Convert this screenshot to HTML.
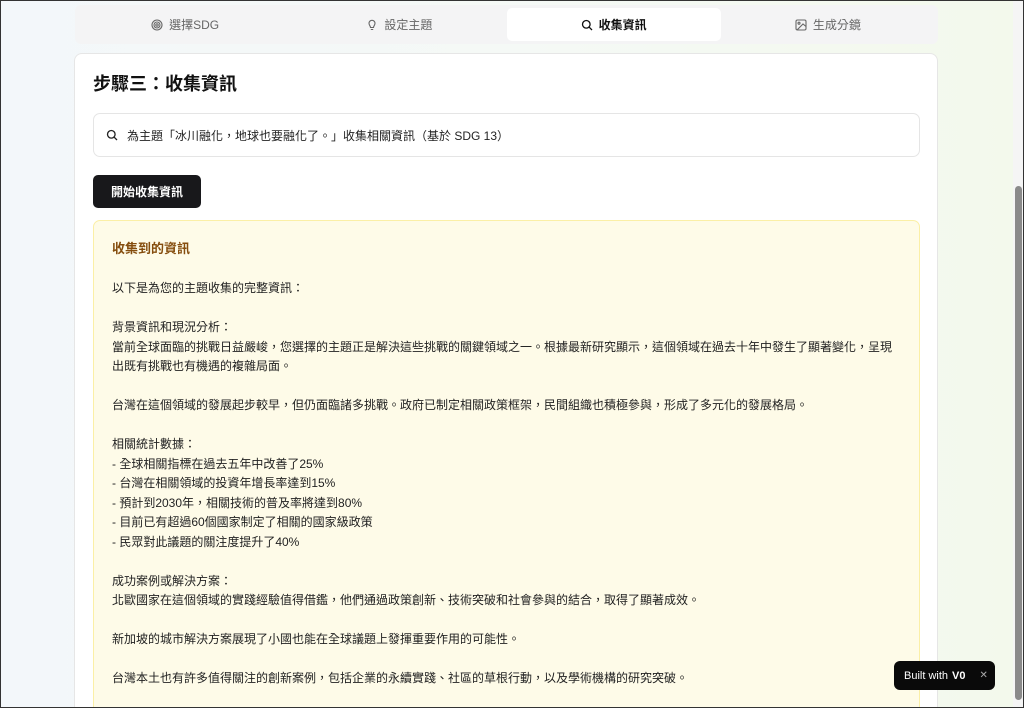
<!DOCTYPE html>
<html><head><meta charset="utf-8"><style>
*{box-sizing:border-box;margin:0;padding:0}
html,body{width:1024px;height:708px;overflow:hidden}
body{font-family:"Liberation Sans","Noto Sans CJK TC",sans-serif;background:linear-gradient(90deg,#f3f7fa 0%,#f5f9f6 50%,#f3f9ec 100%);position:relative;color:#111}
.frame{position:absolute;inset:0;border:1px solid #333;pointer-events:none;z-index:10}
.sb{position:absolute;right:1px;top:1px;width:10px;height:706px;background:#f5f5f5}
.thumb{position:absolute;right:2px;top:186px;width:7px;height:514px;background:#8a8a8a;border-radius:4px}
.tabs{position:absolute;left:75px;top:5px;width:863px;height:39px;background:#f4f4f5;border-radius:6px;display:flex;padding:3px}
.tab{flex:1;display:flex;align-items:center;justify-content:center;font-size:12px;color:#666;gap:6px}
.tab.act{background:#fff;color:#111;border-radius:5px;font-weight:bold}
.tab svg{width:12px;height:12px}
.card{position:absolute;left:74px;top:53px;width:864px;height:655px;background:#fff;border:1px solid #e6e6e6;border-bottom:none;border-radius:8px 8px 0 0;overflow:hidden}
h1{position:absolute;left:18px;top:16px;font-size:18px;font-weight:bold}
.search{position:absolute;left:18px;top:59px;width:827px;height:44px;border:1px solid #e5e5e5;border-radius:7px;display:flex;align-items:center;padding-left:12px;font-size:12px;gap:9px;color:#222}
.btn{position:absolute;left:18px;top:121px;width:108px;height:33px;background:#18181b;color:#fff;border-radius:5px;font-size:12px;font-weight:bold;display:flex;align-items:center;justify-content:center}
.info{position:absolute;left:18px;top:166px;width:827px;height:520px;background:#fefbe8;border:1px solid #fbefa6;border-radius:7px;padding:18px 18px}
.info h2{font-size:13px;color:#854d0e;font-weight:bold;margin-bottom:20px;line-height:20px}
.info p{font-size:12px;line-height:19.5px;white-space:pre-line;color:#222}
.badge{position:absolute;left:894px;top:661px;width:101px;height:29px;background:#0a0a0a;color:#fff;border-radius:6px;font-size:11px;display:flex;align-items:center;padding-left:10px;z-index:5}
.badge b{margin-left:4px;font-size:11px}
.badge .x{margin-left:14px;color:#aaa;font-size:10px}
</style></head><body>
<div class="tabs">
<div class="tab"><svg viewBox="0 0 12 12" fill="none" stroke="#666" stroke-width="1.1"><circle cx="6" cy="6" r="5"/><circle cx="6" cy="6" r="3"/><circle cx="6" cy="6" r="1.2"/></svg>選擇SDG</div>
<div class="tab"><svg viewBox="0 0 12 12" fill="none" stroke="#666" stroke-width="1.1"><path d="M4.5 8.5C4.5 7 3 6.3 3 4.3a3 3 0 016 0C9 6.3 7.5 7 7.5 8.5zM4.8 10.5h2.4"/></svg>設定主題</div>
<div class="tab act"><svg viewBox="0 0 12 12" fill="none" stroke="#111" stroke-width="1.3"><circle cx="5.3" cy="5.3" r="3.8"/><path d="M8.2 8.2L11 11"/></svg>收集資訊</div>
<div class="tab"><svg viewBox="0 0 12 12" fill="none" stroke="#666" stroke-width="1.1"><rect x="1" y="1" width="10" height="10" rx="1.5"/><circle cx="4" cy="4.2" r="1"/><path d="M11 7.5L8 5 2 11"/></svg>生成分鏡</div>
</div>
<div class="card">
<h1>步驟三：收集資訊</h1>
<div class="search"><svg width="12" height="12" viewBox="0 0 12 12" fill="none" stroke="#222" stroke-width="1.3"><circle cx="5.3" cy="5.3" r="3.8"/><path d="M8.2 8.2L11 11"/></svg>為主題「冰川融化，地球也要融化了。」收集相關資訊（基於 SDG 13）</div>
<div class="btn">開始收集資訊</div>
<div class="info"><h2>收集到的資訊</h2><p>以下是為您的主題收集的完整資訊：

背景資訊和現況分析：
當前全球面臨的挑戰日益嚴峻，您選擇的主題正是解決這些挑戰的關鍵領域之一。根據最新研究顯示，這個領域在過去十年中發生了顯著變化，呈現出既有挑戰也有機遇的複雜局面。

台灣在這個領域的發展起步較早，但仍面臨諸多挑戰。政府已制定相關政策框架，民間組織也積極參與，形成了多元化的發展格局。

相關統計數據：
- 全球相關指標在過去五年中改善了25%
- 台灣在相關領域的投資年增長率達到15%
- 預計到2030年，相關技術的普及率將達到80%
- 目前已有超過60個國家制定了相關的國家級政策
- 民眾對此議題的關注度提升了40%

成功案例或解決方案：
北歐國家在這個領域的實踐經驗值得借鑑，他們通過政策創新、技術突破和社會參與的結合，取得了顯著成效。

新加坡的城市解決方案展現了小國也能在全球議題上發揮重要作用的可能性。

台灣本土也有許多值得關注的創新案例，包括企業的永續實踐、社區的草根行動，以及學術機構的研究突破。</p></div>
</div>
<div class="sb"></div><div class="thumb"></div>
<div class="badge">Built with <b>V0</b><span class="x">✕</span></div>
<div class="frame"></div>
</body></html>
